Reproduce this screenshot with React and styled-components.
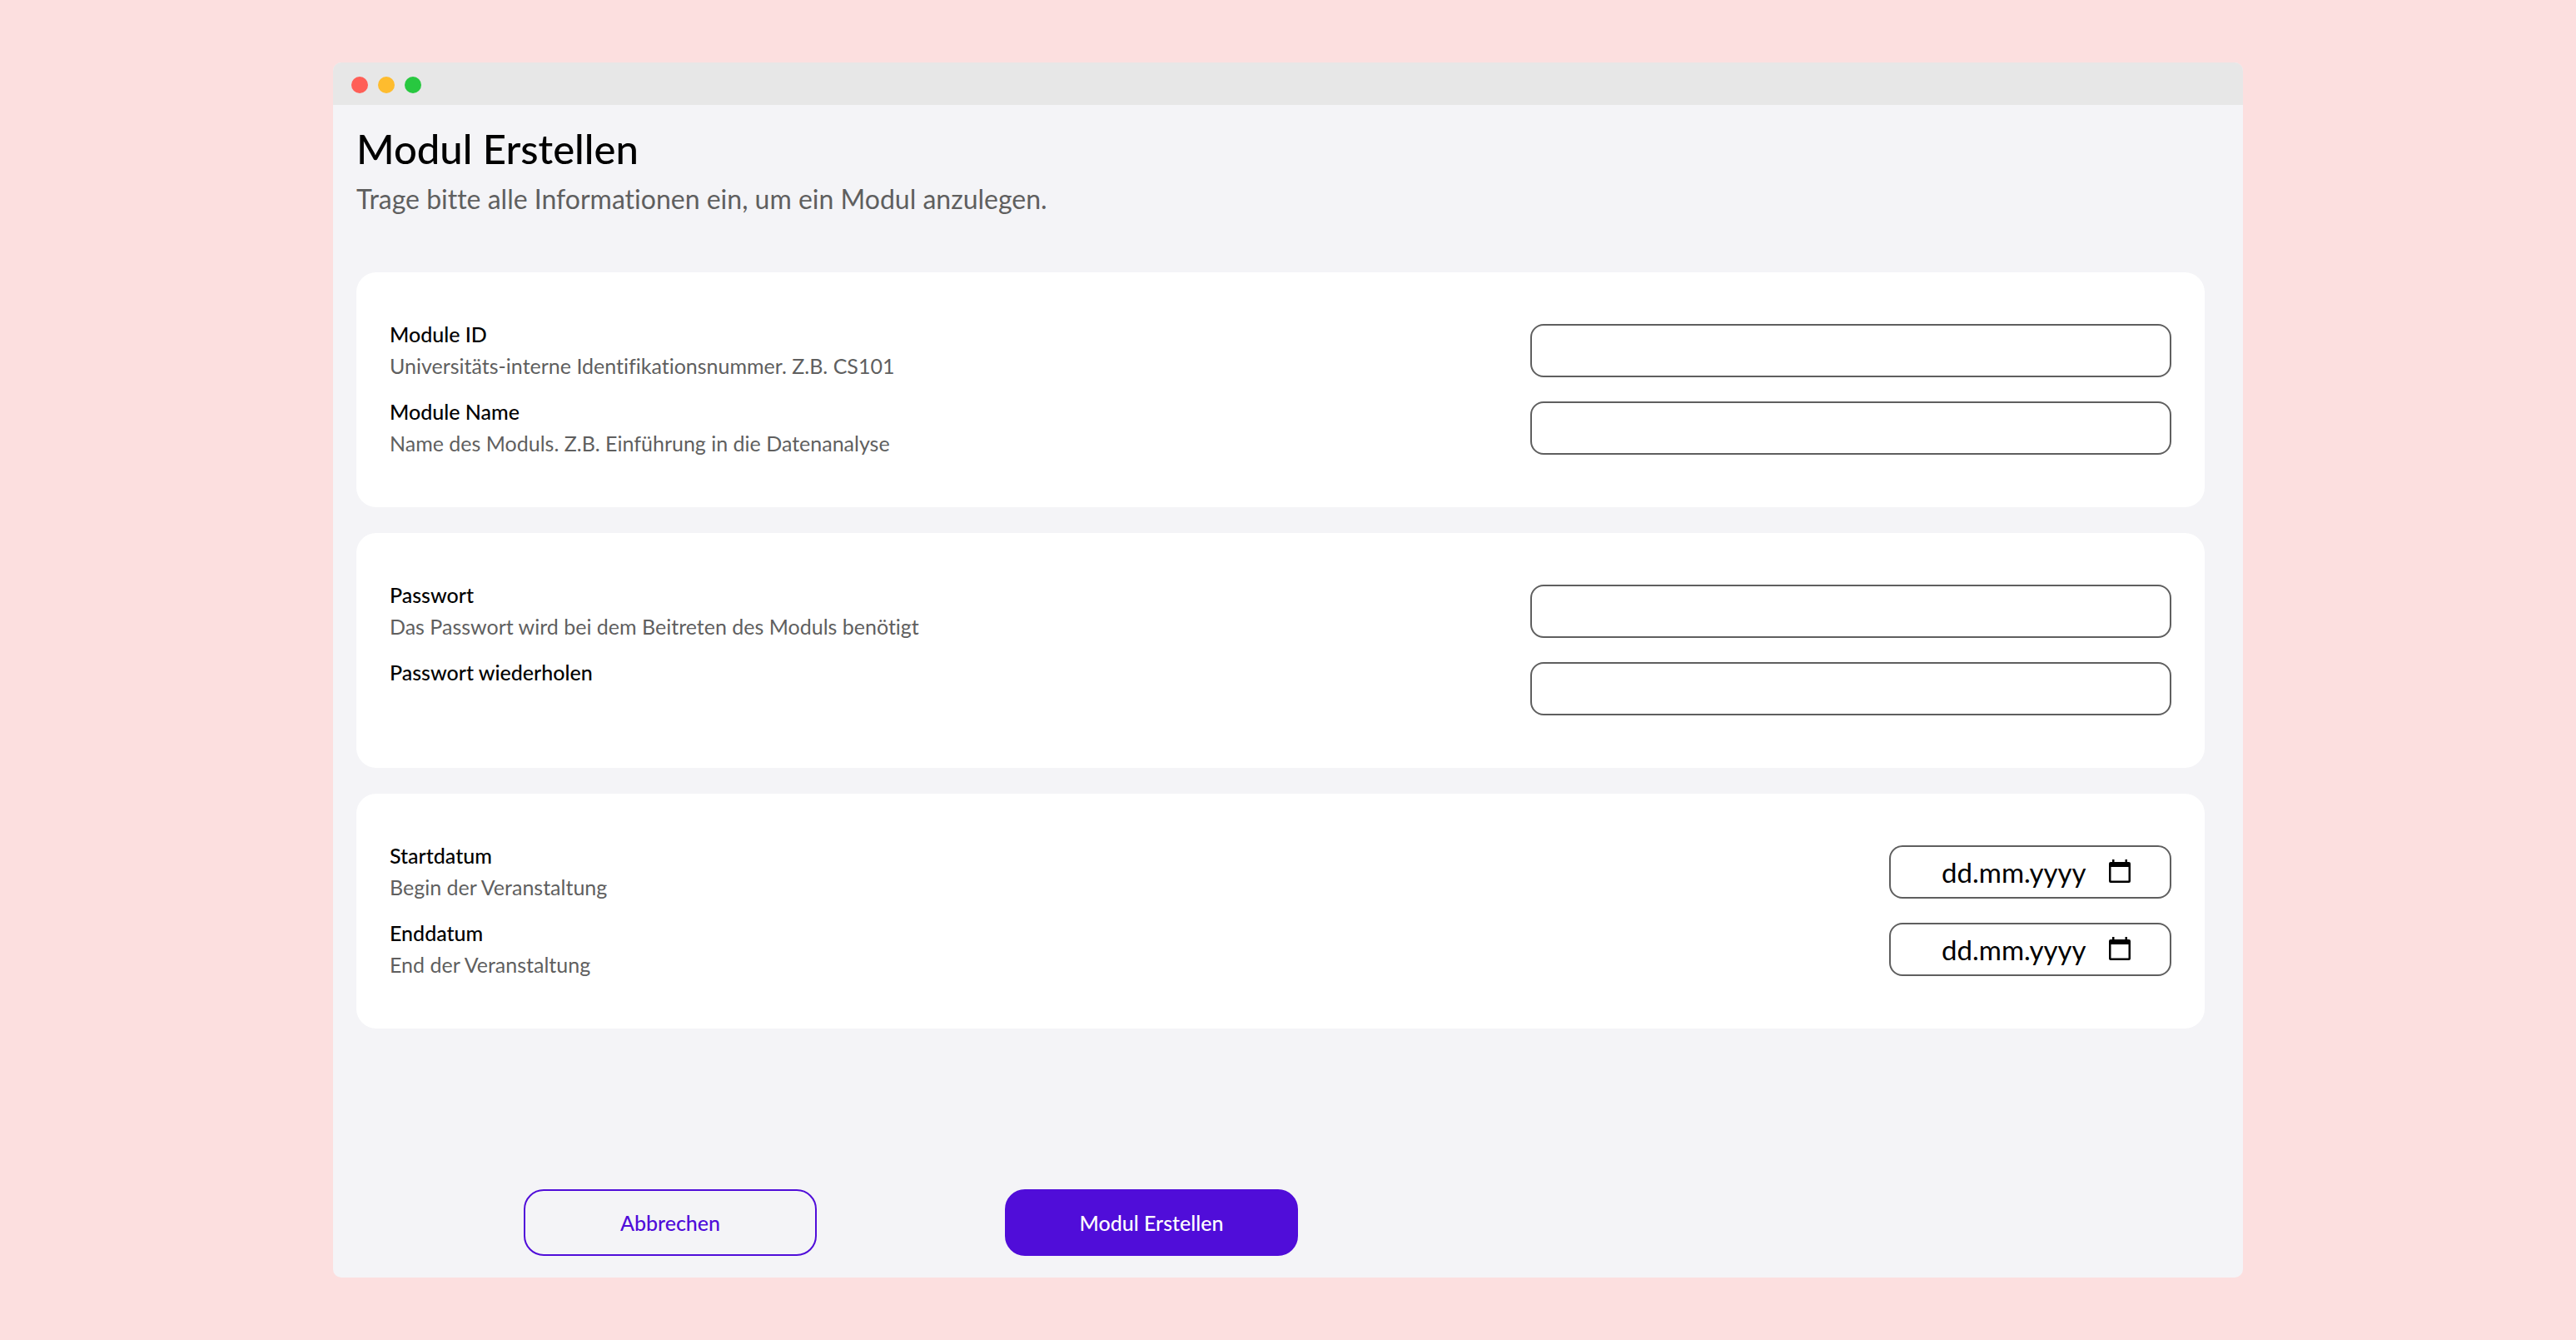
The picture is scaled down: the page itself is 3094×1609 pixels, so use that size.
import React from "react";
import styled, { createGlobalStyle } from "styled-components";

const GlobalStyle = createGlobalStyle`
* {
    box-sizing: border-box;
}

body {
    margin: 0;
    background-color: #fcdfdf;
    font-family: Lato, "Liberation Sans", sans-serif;
    font-variant-ligatures: none;
    color: #000000;
}
`;

const Page = styled.div`
    display: flex;
    min-height: 100vh;
    padding: 75px 400px;
`;

const Window = styled.div`
    flex: 1;
    display: flex;
    flex-direction: column;
    border-radius: 10px;
    overflow: hidden;
    background-color: #f4f4f7;
`;

const TitleBar = styled.div`
    display: flex;
    align-items: center;
    gap: 12px;
    height: 51px;
    padding: 3px 22px 0;
    background-color: #e7e7e7;
`;

const Dot = styled.span`
    width: 20px;
    height: 20px;
    border-radius: 50%;
    background-color: ${(props) => props.$color};
`;

const Form = styled.form`
    flex: 1;
    display: flex;
    flex-direction: column;
    padding: 20px 46px 26px 28px;
`;

const Title = styled.h1`
    margin: 0;
    font-size: 49px;
    font-weight: 500;
    line-height: 64px;
`;

const Subtitle = styled.p`
    margin: 0 0 59px;
    font-size: 32px;
    line-height: 58px;
    color: #5f5f5f;
`;

const Cards = styled.div`
    display: grid;
    gap: 31px;
`;

const Card = styled.section`
    display: grid;
    gap: 29px;
    padding: 62px 40px 63px;
    border-radius: 24px;
    background-color: #ffffff;
`;

const Row = styled.div`
    display: flex;
    justify-content: space-between;
    height: 64px;
`;

const Texts = styled.div`
    display: flex;
    flex-direction: column;
    line-height: 38px;
    margin-top: -7px;
`;

const Label = styled.label`
    font-size: 25px;
    font-weight: 500;
`;

const Hint = styled.span`
    font-size: 25px;
    color: #5f5f5f;
`;

const Input = styled.input`
    width: 36%;
    padding: 0 24px;
    border: 2px solid #5f5f5f;
    border-radius: 16px;
    background-color: #ffffff;
    font: inherit;
    font-size: 32px;
    outline: none;
`;

const DateBox = styled.div`
    display: flex;
    align-items: center;
    justify-content: space-between;
    width: 339px;
    padding: 0 47px 0 61px;
    border: 2px solid #5f5f5f;
    border-radius: 16px;
`;

const DateInput = styled.input`
    width: 180px;
    padding: 0;
    border: 0;
    background: none;
    font: inherit;
    font-size: 33px;
    outline: none;

    &::placeholder {
        color: #000000;
        opacity: 1;
    }
`;

const PickerButton = styled.button`
    display: flex;
    padding: 0 0 2px;
    border: 0;
    background: none;
    cursor: pointer;
`;

const Actions = styled.div`
    display: flex;
    gap: 226px;
    margin-top: auto;
    padding-left: 201px;
`;

const Button = styled.button`
    width: 352px;
    height: 80px;
    border: 2px solid #500dd9;
    border-radius: 24px;
    background-color: ${(props) => (props.$filled ? "#500dd9" : "transparent")};
    color: ${(props) => (props.$filled ? "#ffffff" : "#500dd9")};
    font: inherit;
    font-size: 25px;
    font-weight: 500;
    cursor: pointer;
`;

function CalendarIcon() {
    return (
        <svg width="26" height="28" viewBox="0 0 26 28" aria-hidden="true">
            <path d="M4 0h2.5v3h13V0H22v3h2a2 2 0 0 1 2 2v21a2 2 0 0 1-2 2H2a2 2 0 0 1-2-2V5a2 2 0 0 1 2-2h2zM2.5 9v16.5h21V9z" fillRule="evenodd" />
        </svg>
    );
}

const sections = [
    [
        { id: "moduleId", label: "Module ID", hint: "Universitäts-interne Identifikationsnummer. Z.B. CS101", type: "text" },
        { id: "moduleName", label: "Module Name", hint: "Name des Moduls. Z.B. Einführung in die Datenanalyse", type: "text" },
    ],
    [
        { id: "password", label: "Passwort", hint: "Das Passwort wird bei dem Beitreten des Moduls benötigt", type: "password" },
        { id: "passwordRepeat", label: "Passwort wiederholen", type: "password" },
    ],
    [
        { id: "startDate", label: "Startdatum", hint: "Begin der Veranstaltung", type: "date" },
        { id: "endDate", label: "Enddatum", hint: "End der Veranstaltung", type: "date" },
    ],
];

function Field({ id, label, hint, type }) {
    const hintId = hint ? id + "Hint" : undefined;

    return (
        <Row>
            <Texts>
                <Label htmlFor={id}>{label}</Label>
                {hint && <Hint id={hintId}>{hint}</Hint>}
            </Texts>
            {type === "date" ? (
                <DateBox>
                    <DateInput id={id} name={id} type="text" placeholder="dd.mm.yyyy" aria-describedby={hintId} />
                    <PickerButton type="button" aria-label={label + " auswählen"}>
                        <CalendarIcon />
                    </PickerButton>
                </DateBox>
            ) : (
                <Input id={id} name={id} type={type} aria-describedby={hintId} />
            )}
        </Row>
    );
}

export default function App() {
    return (
        <React.Fragment>
            <GlobalStyle />
            <Page>
                <Window>
                    <TitleBar>
                        <Dot $color="#ff5f57" />
                        <Dot $color="#febc2e" />
                        <Dot $color="#28c840" />
                    </TitleBar>
                    <Form onSubmit={(e) => e.preventDefault()}>
                        <Title>Modul Erstellen</Title>
                        <Subtitle>Trage bitte alle Informationen ein, um ein Modul anzulegen.</Subtitle>
                        <Cards>
                            {sections.map((fields) => (
                                <Card key={fields[0].id}>
                                    {fields.map((field) => (
                                        <Field key={field.id} {...field} />
                                    ))}
                                </Card>
                            ))}
                        </Cards>
                        <Actions>
                            <Button type="button">Abbrechen</Button>
                            <Button type="submit" $filled>Modul Erstellen</Button>
                        </Actions>
                    </Form>
                </Window>
            </Page>
        </React.Fragment>
    );
}
